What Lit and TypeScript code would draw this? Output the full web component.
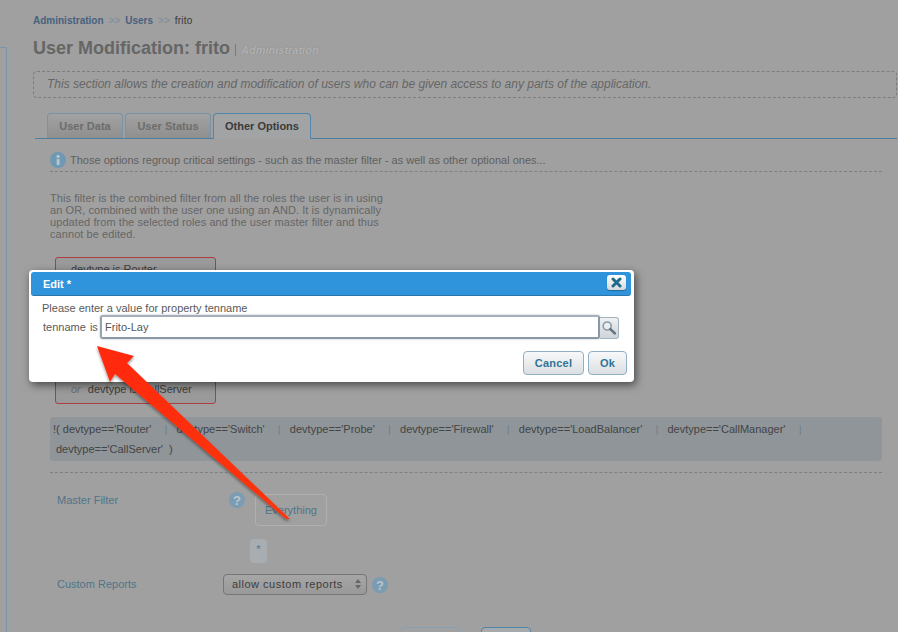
import { LitElement, html, css, svg } from "lit";
import { customElement } from "lit/decorators.js";

const helpIcon = html`<svg class="hicon" width="16" height="16" viewBox="0 0 16 16"><circle cx="8" cy="8" r="8" fill="#7b9cb2"/><text x="8" y="12.6" text-anchor="middle" font-family="Liberation Sans" font-weight="700" font-size="13" fill="#b9c6cf">?</text></svg>`;

@customElement("app-root")
export class AppRoot extends LitElement {
  static styles = css`
    :host { display: block; position: relative; width: 898px; height: 632px; overflow: hidden; background: #a0a0a0; font-family: "Liberation Sans", Arial, sans-serif; color: #5f5f5f; font-size: 11px; }
    .page { display: flex; height: 632px; }
    .side { width: 6px; height: 600px; margin-top: 47px; border-top: 1px solid #7c93a8; border-right: 1px solid #7c93a8; flex: none; }
    .main { flex: 1; padding-left: 26px; min-width: 0; }
    .crumbs { margin-top: 15px; height: 12px; line-height: 12px; font-size: 10px; font-weight: 700; color: #47627f; display: flex; }
    .crumbs i { font-style: normal; font-weight: 700; color: #82919e; margin: 0 5px 0 5px; font-size: 10px; }
    .crumbs b { color: #3a3a3a; font-weight: 400; letter-spacing: .25px; }
    .title { margin-top: 9px; height: 24px; line-height: 24px; font-size: 18px; font-weight: 700; color: #666; display: flex; align-items: baseline; white-space: nowrap; }
    .title span { font-size: 11px; font-style: italic; color: #b2b2b2; margin-left: 5px; border-left: 1px solid #7a7a7a; padding-left: 5px; line-height: 12px; text-shadow: 0 0 1px #7f7f7f; }
    .desc { margin-top: 11px; height: 25px; line-height: 25px; border: 1px dashed #7d7d7d; border-radius: 4px; padding-left: 13px; width: 849px; font-size: 12px; font-style: italic; color: #666; white-space: nowrap; }
    .tabs { margin: 15px 1px 0 2px; height: 26px; border-bottom: 1px solid #4f7f9e; display: flex; gap: 2px; padding-left: 12px; box-sizing: border-box; }
    .tab { height: 25px; box-sizing: border-box; border: 1px solid #7793a9; border-bottom: 0; border-radius: 4px 4px 0 0; font-size: 11px; font-weight: 700; line-height: 25px; text-align: center; color: #6d6d6d; background: linear-gradient(#a2a2a2, #8f8f8f); }
    .tab.on { height: 26px; color: #3b3b3b; background: #a2a3a4; border-color: #4f86a9; }
    .body { padding-left: 17px; width: 832px; }
    .info { margin-top: 11px; height: 19px; display: flex; align-items: center; gap: 4px; border-bottom: 1px dashed #7f7f7f; padding-bottom: 2px; font-size: 11px; color: #5f5f5f; white-space: nowrap; }
    .para { margin: 20px 0 0; width: 340px; line-height: 12px; font-size: 11px; letter-spacing: .07px; color: #666; }
    .roles { margin: 17px 0 0 5px; width: 161px; height: 147px; border: 1px solid #a8403e; border-radius: 3px; background: #9a9a9a; display: flex; flex-direction: column; justify-content: space-between; padding: 5px 0 7px; box-sizing: border-box; color: #3d3d3d; }
    .roles div { padding-left: 15px; line-height: 13px; }
    .roles em { color: #6e6e6e; margin-right: 4px; }
    .code { margin-top: 13px; height: 44px; background: #8f9599; border-radius: 3px; line-height: 20px; padding: 2px 0 0 3px; box-sizing: border-box; color: #444; white-space: pre; font-size: 11px; }
    .code .l2 { padding-left: 3px; }
    .code span { color: #6f7f8a; margin-left: 1px; }
    .rule { margin-top: 11px; border-top: 1px dashed #7f7f7f; height: 0; }
    .mf { display: flex; margin-top: 21px; padding-left: 7px; }
    .mf .hicon { margin-top: -2px; }
    .lbl { color: #4f7589; font-size: 11px; line-height: 13px; }
    .mf .lbl { width: 172px; }
    .ev { margin-left: 10px; width: 72px; height: 32px; box-sizing: border-box; border: 1px solid #b0b0b0; border-radius: 4px; text-align: center; line-height: 31px; color: #4f7589; }
    .star { margin: 13px 0 0 200px; width: 17px; height: 24px; background: #a8adb1; border-radius: 4px; text-align: center; line-height: 20px; color: #4f7589; }
    .cr { display: flex; align-items: center; margin-top: 11px; padding-left: 7px; }
    .cr .lbl { width: 166px; }
    .sel { width: 144px; height: 21px; box-sizing: border-box; border: 1px solid #767676; border-radius: 4px; background: linear-gradient(#a6a6a6, #999); font-size: 11px; letter-spacing: .5px; color: #3d3d3d; line-height: 19px; padding-left: 8px; position: relative; margin-right: 5px; white-space: nowrap; }
    .sel svg { position: absolute; right: 4px; top: 3px; }
    .foot { display: flex; margin: 32px 0 0 351px; }
    .bb { width: 58px; height: 20px; border: 1px solid #88a0b4; border-radius: 4px; box-sizing: border-box; }
    .bb + .bb { width: 50px; margin-left: 22px; border-color: #4f86a9; background: #a6aaad; }
    .dlg { position: absolute; left: 29px; top: 270px; width: 605px; height: 112px; background: #fff; border-radius: 4px; box-shadow: 2px 3px 9px rgba(0,0,0,.55); padding: 2px 3px 0 2px; box-sizing: border-box; color: #5a5a5a; }
    .bar { height: 24px; background: #3094dc; border-bottom: 1px solid #2a76ad; border-radius: 3px; box-sizing: border-box; display: flex; align-items: center; justify-content: space-between; padding: 0 5px 0 12px; color: #fff; font-weight: 700; font-size: 11px; }
    .x { width: 19px; height: 15px; border-radius: 3px; background: linear-gradient(#fff, #d5d9dc); box-shadow: 0 1px 1px rgba(0,0,0,.3); display: flex; align-items: center; justify-content: center; margin-top: -3px; }
    .msg { margin: 6px 0 0 11px; line-height: 13px; font-size: 11px; white-space: nowrap; height: 13px; }
    .row { display: flex; margin: 0 0 0 12px; align-items: flex-start; }
    .row .t { width: 57px; line-height: 22px; padding-top: 1px; white-space: pre; word-spacing: -1px; }
    .inp { width: 500px; height: 24px; box-sizing: border-box; border: 2px solid #8b97a5; border-top-color: #a5aeb9; border-left-color: #98a3b0; box-shadow: 0 0 2px #a8b2be; border-radius: 3px; line-height: 20px; padding-left: 3px; color: #555; background: #fff; font-size: 11px; }
    .srch { width: 19px; height: 22px; margin-top: 2px; box-sizing: border-box; border: 1px solid #9fb3c3; border-left: 0; border-radius: 0 3px 3px 0; background: linear-gradient(#eef0f2, #d0d5d9); display: flex; align-items: center; justify-content: center; }
    .acts { display: flex; justify-content: flex-end; gap: 4px; margin: 12px 4px 0 0; }
    .btn { height: 24px; box-sizing: border-box; border: 1px solid #8fb0c6; border-radius: 4px; background: linear-gradient(#f7f8f9, #dcdfe2); color: #2f7597; font-size: 11px; font-weight: 700; line-height: 22px; text-align: center; letter-spacing: .2px; }
    .arrow { position: absolute; left: 0; top: 0; pointer-events: none; }
  `;

  render() {
    return html`
      <div class="page">
        <div class="side"></div>
        <div class="main">
          <div class="crumbs">Administration<i>&gt;&gt;</i>Users<i>&gt;&gt;</i><b>frito</b></div>
          <div class="title">User Modification: frito<span>Administration</span></div>
          <div class="desc">This section allows the creation and modification of users who can be given access to any parts of the application.</div>
          <div class="tabs">
            <div class="tab" style="width:76px">User Data</div>
            <div class="tab" style="width:86px">User Status</div>
            <div class="tab on" style="width:98px">Other Options</div>
          </div>
          <div class="body">
            <div class="info">
              <svg width="16" height="16" viewBox="0 0 16 16"><circle cx="8" cy="8" r="8" fill="#6f98b3"/><rect x="6.7" y="7" width="2.8" height="6" fill="#b7c6d0"/><circle cx="8.1" cy="4.4" r="1.6" fill="#b7c6d0"/></svg>
              Those options regroup critical settings - such as the master filter - as well as other optional ones...
            </div>
            <p class="para">This filter is the combined filter from all the roles the user is in using an OR, combined with the user one using an AND. It is dynamically updated from the selected roles and the user master filter and thus cannot be edited.</p>
            <div class="roles">
              <div>devtype is Router</div>
              <div><em>or</em> devtype is CallServer</div>
            </div>
            <div class="code"><div>!( devtype=='Router'    <span>|</span>   devtype=='Switch'    <span>|</span>   devtype=='Probe'    <span>|</span>   devtype=='Firewall'    <span>|</span>   devtype=='LoadBalancer'    <span>|</span>   devtype=='CallManager'    <span>|</span></div><div class="l2">devtype=='CallServer'  )</div></div>
            <div class="rule"></div>
            <div class="mf">
              <div class="lbl">Master Filter</div>
              ${helpIcon}
              <div class="ev">Everything</div>
            </div>
            <div class="star">*</div>
            <div class="cr">
              <div class="lbl">Custom Reports</div>
              <div class="sel">allow custom reports
                <svg width="8" height="12" viewBox="0 0 8 12"><path d="M4 1 7 5H1ZM4 11 1 7H7Z" fill="#666"/></svg>
              </div>
              ${helpIcon}
            </div>
            <div class="foot"><div class="bb"></div><div class="bb"></div></div>
          </div>
        </div>
      </div>

      <div class="dlg">
        <div class="bar">Edit *
          <div class="x"><svg width="11" height="11" viewBox="0 0 11 11"><path d="M2 2 9 9M9 2 2 9" stroke="#1f6a8c" stroke-width="3" stroke-linecap="round"/></svg></div>
        </div>
        <div class="msg">Please enter a value for property tenname</div>
        <div class="row">
          <div class="t">tenname  is</div>
          <div class="inp">Frito-Lay</div>
          <div class="srch"><svg width="16" height="16" viewBox="0 0 16 16"><circle cx="6.2" cy="6" r="4" fill="#e8eef2" stroke="#8a9aa6" stroke-width="1.6"/><path d="M9.2 9 14 13.5" stroke="#66757f" stroke-width="2.4" stroke-linecap="round"/></svg></div>
        </div>
        <div class="acts">
          <div class="btn" style="width:61px">Cancel</div>
          <div class="btn" style="width:39px">Ok</div>
        </div>
      </div>

      <svg class="arrow" width="898" height="632" viewBox="0 0 898 632">
        <defs>
          <linearGradient id="ag" x1="0" y1="0" x2="1" y2="1"><stop offset="0" stop-color="#ff2a0c"/><stop offset="1" stop-color="#fb3510"/></linearGradient>
          <filter id="as" x="-20%" y="-20%" width="140%" height="140%"><feDropShadow dx="0" dy="2" stdDeviation="1.5" flood-color="#000" flood-opacity=".4"/></filter>
        </defs>
        ${svg`<polygon points="97,346 134,356 127,363 290,519 286,519 115,374 110,382" fill="url(#ag)" filter="url(#as)"/>`}
      </svg>
    `;
  }
}
